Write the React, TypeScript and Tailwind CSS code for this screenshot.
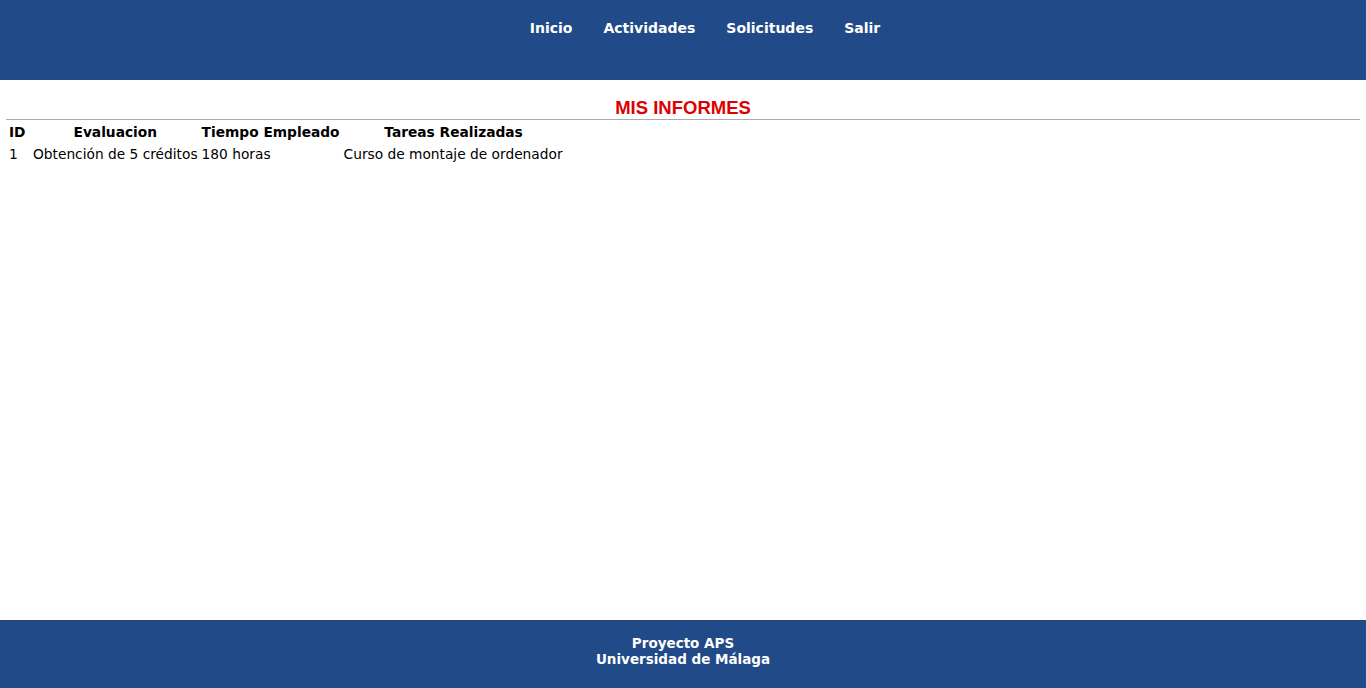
export default function App() {
  const font = { fontFamily: '"DejaVu Sans", Verdana, sans-serif' };
  return (
    <div className="flex h-[688px] flex-col bg-white" style={font}>
      <header className="h-[80px] bg-[#214a88]">
        <ul className="flex justify-center gap-[31px] pl-[44px] pt-[18px] text-[14px] font-bold leading-[20px] text-white">
          <li>Inicio</li>
          <li>Actividades</li>
          <li>Solicitudes</li>
          <li>Salir</li>
        </ul>
      </header>
      <main className="flex-1 px-[6px] pt-[18px]">
        <h2
          className="text-center text-[18.5px] font-bold leading-[20px] text-[#dd0000]"
          style={{ fontFamily: '"Liberation Sans", Arial, sans-serif' }}
        >
          MIS INFORMES
        </h2>
        <div className="mt-[1px] h-px bg-[#aaaaaa]" />
        <table className="border-separate border-spacing-[2px] text-[13.75px] leading-[18px] text-black">
          <thead>
            <tr>
              <th className="min-w-[22px] p-[1px] text-left font-bold">ID</th>
              <th className="min-w-[165px] p-[1px] text-center font-bold">Evaluacion</th>
              <th className="min-w-[138px] p-[1px] text-center font-bold">Tiempo Empleado</th>
              <th className="min-w-[222px] p-[1px] text-center font-bold">Tareas Realizadas</th>
            </tr>
          </thead>
          <tbody>
            <tr>
              <td className="p-[1px]">1</td>
              <td className="whitespace-nowrap p-[1px]">Obtención de 5 créditos</td>
              <td className="whitespace-nowrap p-[1px]">180 horas</td>
              <td className="whitespace-nowrap p-[1px]">Curso de montaje de ordenador</td>
            </tr>
          </tbody>
        </table>
      </main>
      <footer className="flex h-[68px] flex-col items-center pt-[15px] bg-[#214a88] text-[13.5px] font-bold leading-[16px] text-white">
        <div>Proyecto APS</div>
        <div>Universidad de Málaga</div>
      </footer>
    </div>
  );
}
